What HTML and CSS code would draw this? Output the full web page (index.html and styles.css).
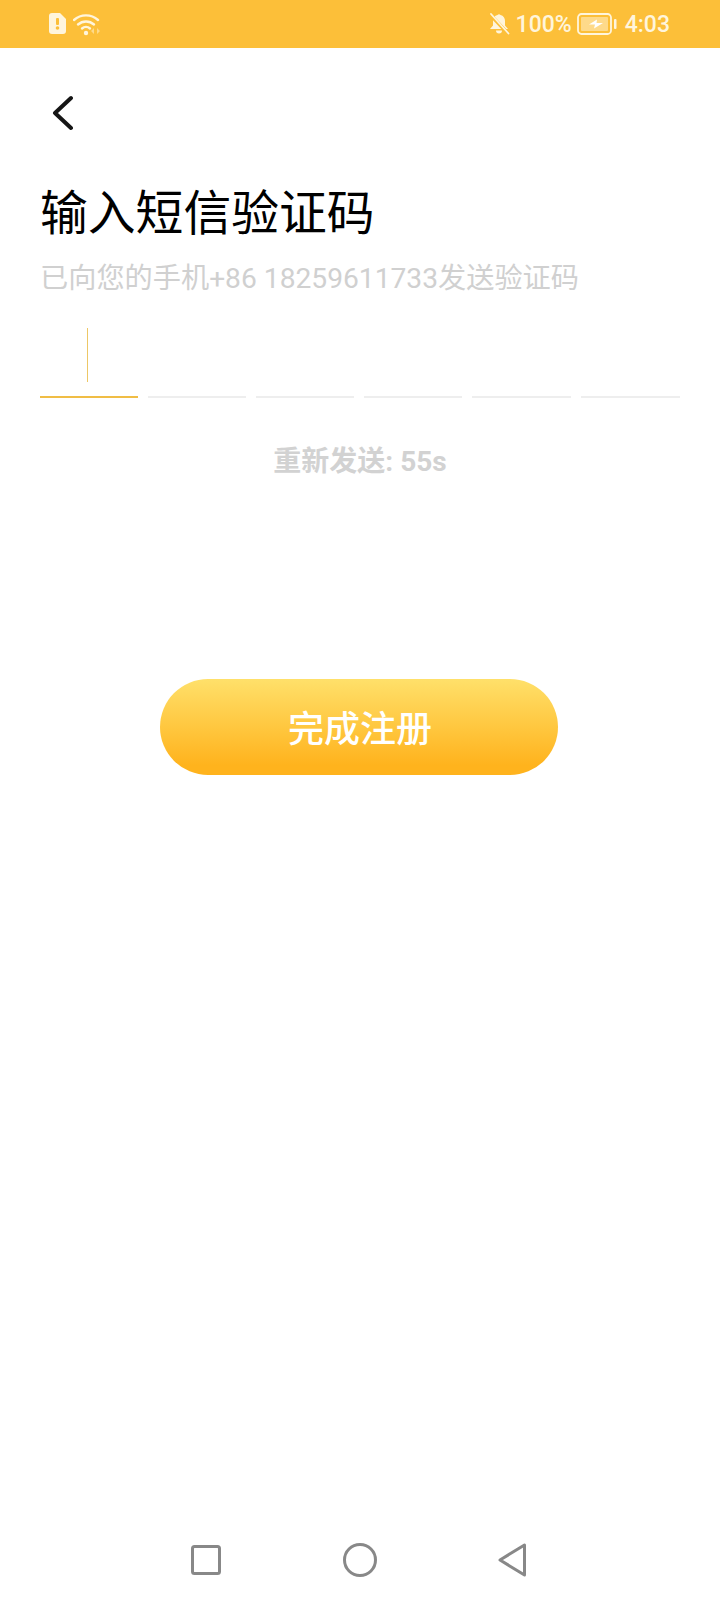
FILE: index.html
```html
<!DOCTYPE html>
<html lang="zh">
<head>
<meta charset="utf-8">
<title>输入短信验证码</title>
<link rel="stylesheet" href="styles.css">
</head>
<body>
<div class="screen">
  <header class="status">
    <div class="status-left">
      <svg class="sim" width="17" height="21" viewBox="0 0 17 21"><path d="M3 0h8l6 6v12a3 3 0 0 1-3 3H3a3 3 0 0 1-3-3V3a3 3 0 0 1 3-3z" fill="#fff5dc"/><rect x="7" y="5" width="3" height="7" rx="1" fill="#fcbf39"/><circle cx="8.500" cy="15" r="1.800" fill="#fcbf39"/></svg>
      <svg class="wifi" width="28" height="23" viewBox="0 0 28 23"><g fill="none" stroke="#fff5dc" stroke-width="2.400" stroke-linecap="round"><path d="M1 7a18 18 0 0 1 24 0"/><path d="M5 11.500a12 12 0 0 1 16 0"/><path d="M9 15.500a6 6 0 0 1 8 0"/></g><circle cx="13" cy="20" r="2.200" fill="#fff5dc"/><path d="M21 17l-3 3 3 3zM24 17l3 3-3 3z" fill="#fff5dc" opacity=".5" transform="translate(0 -2)"/></svg>
    </div>
    <div class="status-right">
      <svg class="bell" width="22" height="22" viewBox="0 0 22 22"><path d="M9.500 2a2 2 0 0 1 3 0c3 .8 4.500 3 4.500 6v4.500l3 3.500H2l3-3.500V8c0-3 1.500-5.200 4.500-6z" fill="#fff5dc"/><path d="M8 17.500h6a3 3 0 0 1-6 0z" fill="#fff5dc"/><path d="M2 1.500l18 19" stroke="#fcbf39" stroke-width="3.500"/><path d="M3 1l17.500 19.500" stroke="#fff5dc" stroke-width="1.800" stroke-linecap="round"/></svg>
      <span class="pct">100%</span>
      <svg class="batt" width="40" height="22" viewBox="0 0 40 22"><rect x="1" y="1" width="33" height="20" rx="3.500" fill="none" stroke="#fff5dc" stroke-width="1.800"/><rect x="4" y="4" width="27" height="14" rx="1" fill="#fff5dc" opacity=".5"/><path d="M20 6.500l-8 5h6l-1 4 9-5.500h-6.500z" fill="#fff"/><rect x="37" y="6" width="2.500" height="10" rx="1" fill="#fff5dc"/></svg>
      <span class="time">4:03</span>
    </div>
  </header>

  <main class="content">
    <button class="back" aria-label="返回">
      <svg width="24" height="38" viewBox="0 0 24 38"><path d="M22 3L6 18 22 33" fill="none" stroke="#151515" stroke-width="4" stroke-linecap="round" stroke-linejoin="round"/></svg>
    </button>
    <h1 class="title">输入短信验证码</h1>
    <p class="sub">已向您的手机+86 18259611733发送验证码</p>
    <div class="code">
      <div class="cell active"><span class="caret"></span></div>
      <div class="cell"></div>
      <div class="cell"></div>
      <div class="cell"></div>
      <div class="cell wide"></div>
      <div class="cell wide"></div>
    </div>
    <p class="resend">重新发送: 55s</p>
    <button class="submit">完成注册</button>
  </main>

  <nav class="nav">
    <svg width="30" height="30" viewBox="0 0 30 30"><rect x="1.500" y="1.500" width="27" height="27" rx="2" fill="none" stroke="#888" stroke-width="3"/></svg>
    <svg width="34" height="34" viewBox="0 0 34 34"><circle cx="17" cy="17" r="15.500" fill="none" stroke="#888" stroke-width="3"/></svg>
    <svg width="28" height="34" viewBox="0 0 28 34"><path d="M26.500 2v30L2 17z" fill="none" stroke="#888" stroke-width="3" stroke-linejoin="round"/></svg>
  </nav>
</div>
</body>
</html>
```

FILE: styles.css
```css
* { box-sizing: border-box; }
html, body { margin: 0; padding: 0; background: #fff; }
body { font-family: Roboto, "Noto Sans CJK SC", sans-serif; }
.screen { width: 720px; height: 1600px; display: flex; flex-direction: column; background: #fff; }

.status { height: 48px; flex: none; background: #fcbf39; display: flex; justify-content: space-between; align-items: center; padding: 0 50px 0 49px; color: #fff5dc; }
.status-left, .status-right { display: flex; align-items: center; }
.status-left { gap: 7px; }
.sim { margin-top: -1px; }
.wifi { margin-top: 1px; }
.pct { font-size: 23px; font-weight: 500; margin-left: 6px; }
.batt { margin-left: 5px; }
.time { font-size: 23px; font-weight: 500; margin-left: 8px; }

.content { flex: 1; display: flex; flex-direction: column; padding: 0 40px; }
.back { width: 24px; height: 38px; margin: 47px 0 0 9px; padding: 0; border: 0; background: none; display: block; }
.title { margin: 50px 0 0; font-size: 47.800px; line-height: 62px; font-weight: 400; color: #000; }
.sub { margin: 14px 0 0; font-size: 28.200px; line-height: 40px; color: #d0d0d0; white-space: nowrap; }

.code { display: flex; gap: 10px; margin-top: 29px; }
.cell { width: 98px; height: 70px; border-bottom: 2px solid #eeeeee; position: relative; }
.cell.wide { width: 99px; }
.cell.active { border-bottom-color: #f0bd45; }
.caret { position: absolute; left: 47px; top: 0; width: 1px; height: 54px; background: #edc766; }

.resend { margin: 46px 0 0; text-align: center; font-size: 28px; line-height: 36px; font-weight: 700; color: #d2d2d2; }
.submit { align-self: center; width: 398px; height: 96px; margin: 199px 2px 0 0; padding: 5px 0 0 2px; border: 0; border-radius: 48px; background: linear-gradient(180deg, #ffe06a 0%, #ffb31d 90%); color: #fff; font: 500 36px/1 Roboto, "Noto Sans CJK SC", sans-serif; }

.nav { height: 80px; flex: none; display: flex; justify-content: space-between; align-items: center; padding: 0 194px 0 191px; }
```
